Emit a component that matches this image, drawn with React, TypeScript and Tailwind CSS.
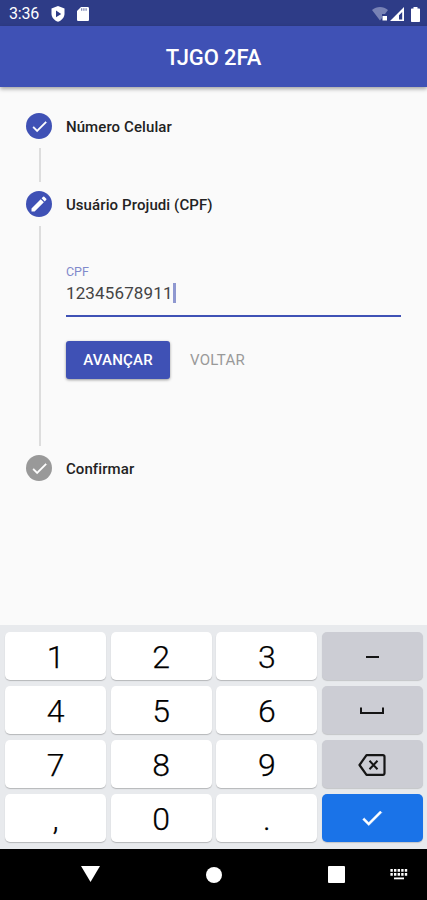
import type { ReactNode } from "react";

type IconProps = { className?: string };

type KeypadKey = {
  id: string;
  label: ReactNode;
  tone: "digit" | "action" | "submit";
};

const keyTones = {
  digit: "bg-white pt-0.5 text-[32px] font-light text-black [-webkit-text-stroke:0.25px_black] shadow-[0_1px_1px_rgba(0,0,0,0.22)]",
  action: "bg-[#cccdd4] pt-0.5 text-[#151515] shadow-[0_1px_1px_rgba(0,0,0,0.16)]",
  submit: "bg-[#1a73e8] text-white shadow-[0_1px_1px_rgba(0,0,0,0.16)]",
};

const keyboardColumns = [0.4, 4, 7.6, 11.2, 14.8];

function CheckIcon({ className }: IconProps) {
  return (
    <svg viewBox="0 0 24 24" fill="currentColor" stroke="currentColor" strokeWidth="0.5" className={className}>
      <path d="M9 16.17 4.83 12l-1.42 1.41L9 19 21 7l-1.41-1.41z" />
    </svg>
  );
}

function PencilIcon({ className }: IconProps) {
  return (
    <svg viewBox="0 0 24 24" fill="currentColor" className={className}>
      <path d="M3 17.25V21h3.75L17.81 9.94l-3.75-3.75L3 17.25zM20.71 7.04a1 1 0 0 0 0-1.41l-2.34-2.34a1 1 0 0 0-1.41 0l-1.83 1.83 3.75 3.75 1.83-1.83z" />
    </svg>
  );
}

function SpaceIcon() {
  return (
    <svg viewBox="0 0 26 8" fill="none" stroke="currentColor" strokeWidth="2" className="h-2 w-[26px]">
      <path d="M2 0.5v5.5h22v-5.5" />
    </svg>
  );
}

function BackspaceIcon() {
  return (
    <svg viewBox="0 0 28 22" fill="none" stroke="currentColor" strokeWidth="2.2" strokeLinejoin="round" className="h-[22px] w-7">
      <path d="M8.5 1.2h16.5a1.5 1.5 0 0 1 1.5 1.5v16.6a1.5 1.5 0 0 1-1.5 1.5H8.5L1.5 11z" />
      <path d="M11.5 6.8l8 8.4M19.5 6.8l-8 8.4" strokeWidth="2" />
    </svg>
  );
}

const keys: KeypadKey[] = [
  { id: "1", label: "1", tone: "digit" },
  { id: "2", label: "2", tone: "digit" },
  { id: "3", label: "3", tone: "digit" },
  { id: "minus", label: <span className="h-[2.5px] w-[13px] bg-current" />, tone: "action" },
  { id: "4", label: "4", tone: "digit" },
  { id: "5", label: "5", tone: "digit" },
  { id: "6", label: "6", tone: "digit" },
  { id: "space", label: <SpaceIcon />, tone: "action" },
  { id: "7", label: "7", tone: "digit" },
  { id: "8", label: "8", tone: "digit" },
  { id: "9", label: "9", tone: "digit" },
  { id: "backspace", label: <BackspaceIcon />, tone: "action" },
  { id: "comma", label: ",", tone: "digit" },
  { id: "0", label: "0", tone: "digit" },
  { id: "period", label: ".", tone: "digit" },
  { id: "done", label: <CheckIcon className="size-[26px]" />, tone: "submit" },
];

function StatusBar() {
  return (
    <div className="flex h-[26px] items-center bg-[#2e3c87] pt-0.5 pr-[7px] pl-[9px] text-white">
      <span className="w-[42px] text-base leading-none tracking-[-0.2px]">3:36</span>
      <svg viewBox="0 0 14 16" className="h-4 w-3.5">
        <path fill="currentColor" d="M7 0l6.5 2.6v5.2c0 3.6-2.6 6.6-6.5 8-3.9-1.4-6.5-4.4-6.5-8V2.6z" />
        <path fill="#2e3c87" d="M5 4.6v6.6l5.2-3.3z" />
      </svg>
      <svg viewBox="0 0 12 14" className="ml-[12px] h-3.5 w-3">
        <path fill="currentColor" d="M4 0h6.7c.7 0 1.3.6 1.3 1.3v11.4c0 .7-.6 1.3-1.3 1.3H1.3C.6 14 0 13.4 0 12.7V4z" />
        <path stroke="#7680b0" strokeWidth="1.2" d="M4.7 1.2v2.5M6.9 1.2v2.5M9.1 1.2v2.5" />
      </svg>
      <div className="ml-auto flex items-center">
        <svg viewBox="0 0 17 14" className="h-3.5 w-[17px]">
          <path fill="#7882b5" d="M0 3c4.7-4 11.3-4 16 0l-3 4h-3v4l-2 2.5z" />
          <path fill="currentColor" d="M10.5 9h4.5v4.5h-4.5z" />
        </svg>
        <svg viewBox="0 0 14 14" className="ml-px h-3.5 w-3.5">
          <path fill="currentColor" fillRule="evenodd" d="M14 0v14H0zM12.2 5L9 8.2v4.3h3.2z" />
        </svg>
        <svg viewBox="0 0 9 15" className="ml-[7px] h-[15px] w-[9px]">
          <path fill="currentColor" d="M2.5 0h4v1.5H8c.6 0 1 .4 1 1V14c0 .6-.4 1-1 1H1c-.6 0-1-.4-1-1V2.5c0-.6.4-1 1-1h1.5z" />
        </svg>
      </div>
    </div>
  );
}

function StepHeader({ label, done = true, icon }: { label: string; done?: boolean; icon: ReactNode }) {
  return (
    <div className="flex h-[26px] items-center gap-[13.5px]">
      <span className={`flex size-[26px] items-center justify-center rounded-full text-white ${done ? "bg-[#3f51b5]" : "bg-[#999999]"}`}>{icon}</span>
      <span className="pt-px text-[15px] font-medium tracking-[0.1px] text-[#222222]">{label}</span>
    </div>
  );
}

function CpfForm() {
  return (
    <div className="flex-1 pt-[38px] pl-[24.6px]">
      <label htmlFor="cpf" className="block text-[12.5px] leading-4 text-[#8089cb]">
        CPF
      </label>
      <div id="cpf" className="flex h-[37px] items-start border-b-2 border-[#3f51b5] pt-0.5 text-[17px] text-[#444444]">
        <span className="leading-[22px] tracking-[0.14px]">12345678911</span>
        <span className="mt-px h-5 w-[3px] bg-[#8f98d0]" />
      </div>
      <div className="mt-6 flex items-center gap-5">
        <button className="h-[38px] w-26 rounded-[3px] bg-[#3f51b5] text-[15px] font-medium tracking-[0.2px] text-white shadow-[0_1px_3px_rgba(0,0,0,0.4)]">AVANÇAR</button>
        <button className="text-[15px] tracking-[0.3px] text-[#999999]">VOLTAR</button>
      </div>
    </div>
  );
}

function Stepper() {
  return (
    <main className="flex-1 pt-[26.4px] pr-[26px] pl-[26.4px]">
      <StepHeader label="Número Celular" icon={<CheckIcon className="size-[19px]" />} />
      <div className="mt-[9px] mb-[9px] ml-[13px] h-[34px] w-0.5 bg-[#dddddd]" />
      <StepHeader label="Usuário Projudi (CPF)" icon={<PencilIcon className="size-5" />} />
      <div className="my-[9px] ml-[13px] flex h-[220px]">
        <div className="w-0.5 bg-[#dddddd]" />
        <CpfForm />
      </div>
      <StepHeader label="Confirmar" done={false} icon={<CheckIcon className="size-[19px]" />} />
    </main>
  );
}

function Keypad() {
  return (
    <div className="grid h-[224px] grid-cols-4 content-start gap-x-[4.67px] gap-y-1.5 bg-[#e8eaed] pt-[7px] pr-1 pl-[5px]">
      {keys.map((key) => (
        <button key={key.id} className={`flex h-12 items-center justify-center rounded-[5px] leading-none ${keyTones[key.tone]}`}>
          {key.label}
        </button>
      ))}
    </div>
  );
}

function NavigationBar() {
  return (
    <nav className="flex h-[51px] items-center bg-black pl-[81px] text-white">
      <svg viewBox="0 0 19 16" fill="currentColor" className="-mt-0.5 h-4 w-[19px]">
        <path d="M0 0h19l-9.5 16z" />
      </svg>
      <span className="ml-[106px] size-4 rounded-full bg-white" />
      <span className="ml-[106px] size-[17px] rounded-[1px] bg-white" />
      <svg viewBox="0 0 18 11" fill="currentColor" className="ml-[45px] h-[11px] w-[18px]">
        {keyboardColumns.map((x) => (
          <path key={x} d={`M${x} 0h2.4v2.8h-2.4zM${x} 4h2.4v2.8h-2.4z`} />
        ))}
        <path d="M4 8.5h10v1.8H4z" />
      </svg>
    </nav>
  );
}

export default function App() {
  return (
    <div className="flex h-[900px] w-[427px] flex-col overflow-hidden bg-[#fafafa] font-[Roboto,sans-serif]">
      <StatusBar />
      <header className="flex h-[61px] items-center justify-center bg-[#3f51b5] pt-0.5 text-[22px] font-medium tracking-[-0.1px] text-white shadow-[0_2px_4px_rgba(0,0,0,0.35)]">TJGO 2FA</header>
      <Stepper />
      <Keypad />
      <NavigationBar />
    </div>
  );
}
